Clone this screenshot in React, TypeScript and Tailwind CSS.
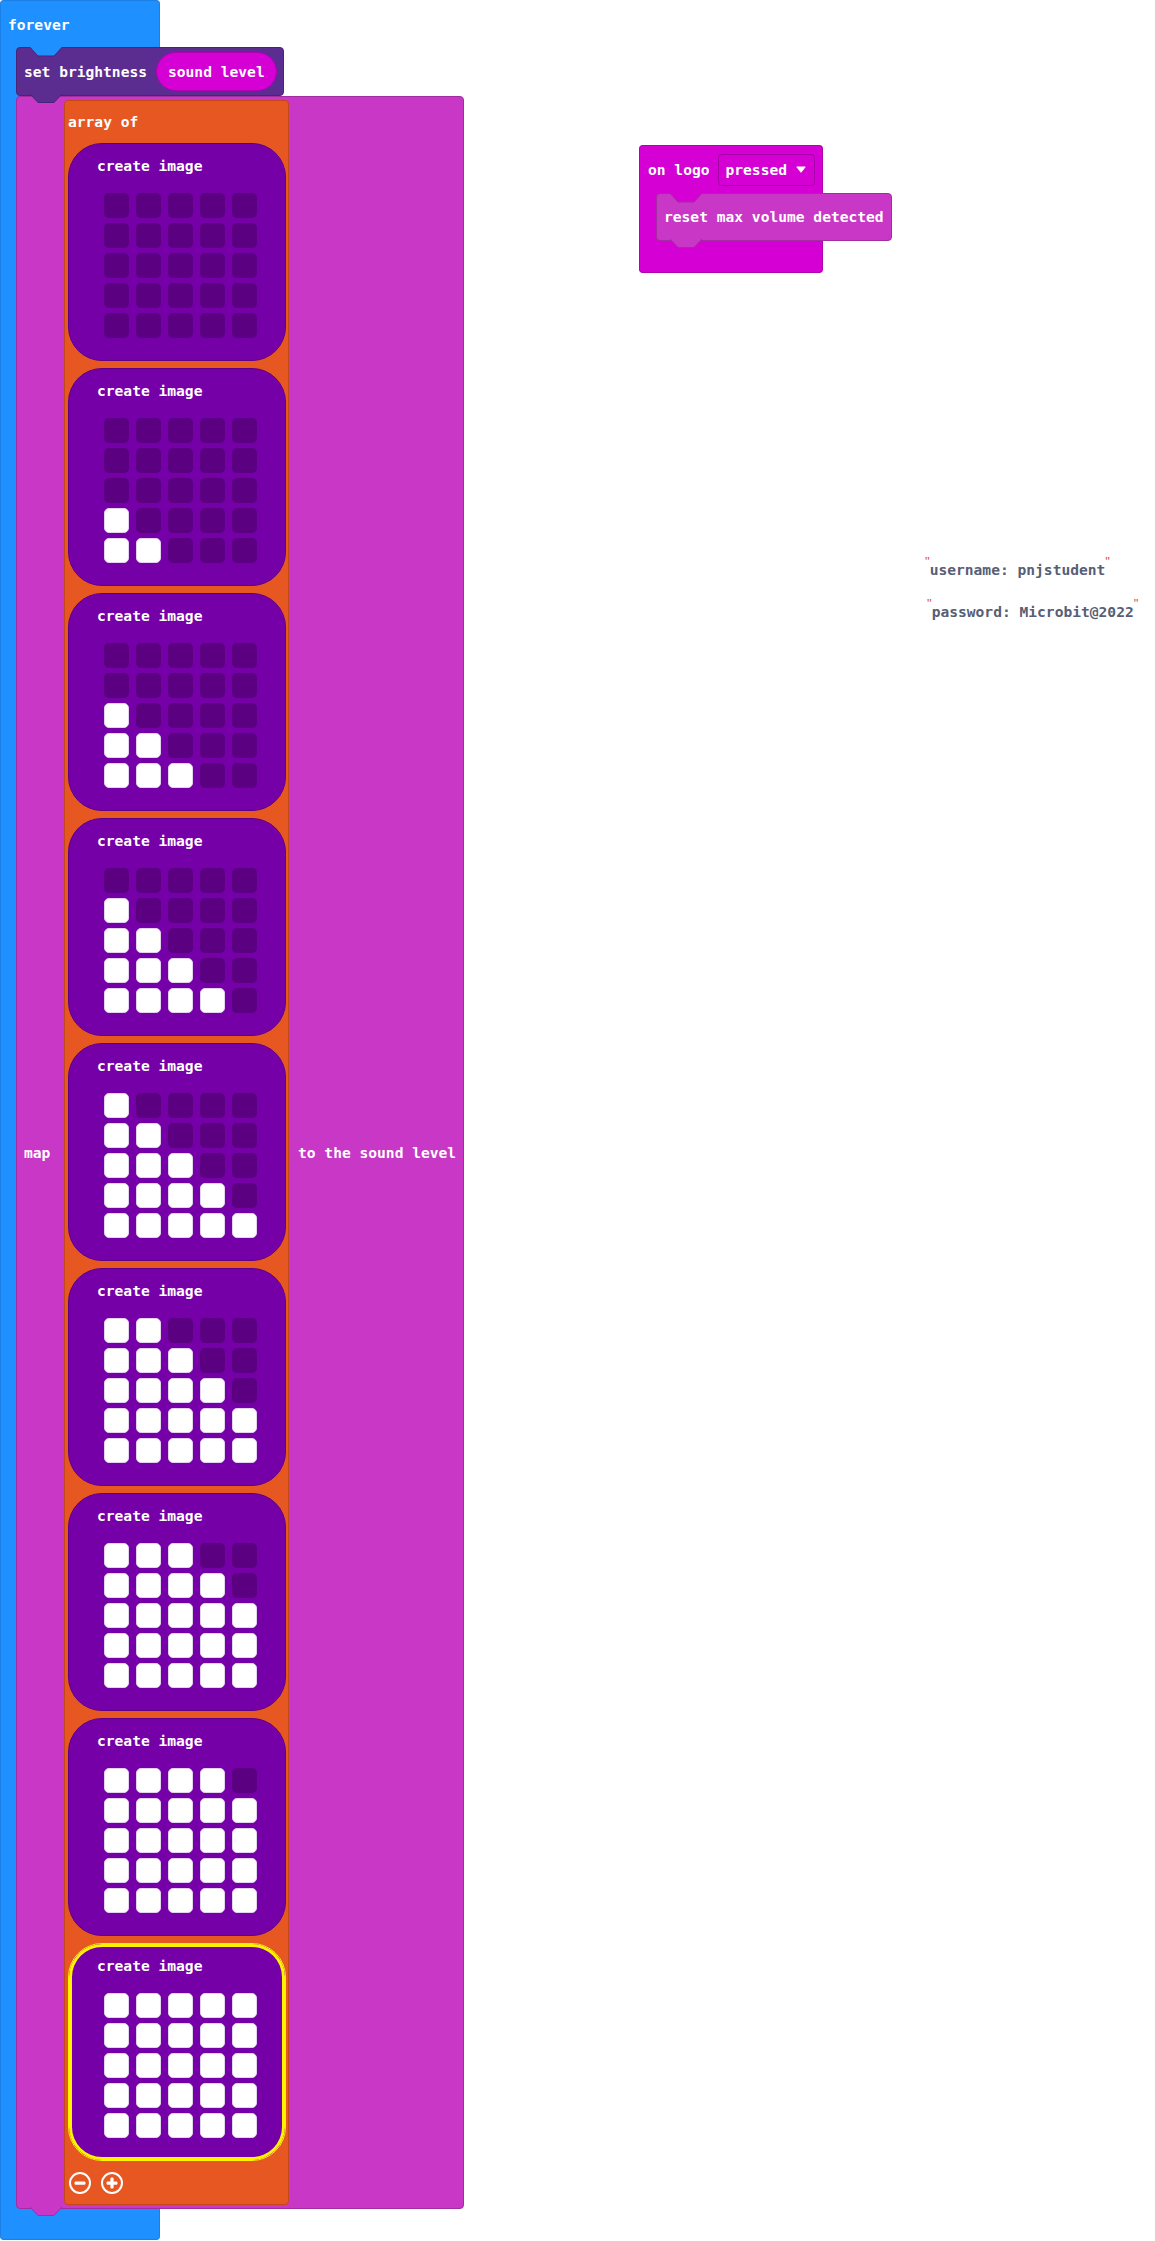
import React from "react";

// brightness levels for each frame (0 = all off)
const LEVELS = [0, 2, 3, 4, 5, 6, 7, 8, 9];

function Notch({ fill, stroke, className }: { fill: string; stroke: string; className: string }) {
  return (
    <svg width="32" height="10" viewBox="0 0 32 10" className={className}>
      <polygon points="0,0 32,0 24,9 8,9" fill={fill} />
      <polyline points="0,0.5 8,9 24,9 32,0.5" fill="none" stroke={stroke} strokeWidth="1" />
    </svg>
  );
}

function Tab({ fill, stroke, className }: { fill: string; stroke: string; className: string }) {
  return (
    <svg width="32" height="10" viewBox="0 0 32 10" className={className}>
      <polygon points="0,0 32,0 24,8.5 8,8.5" fill={fill} />
      <polyline points="0,0 8,8.5 24,8.5 32,0" fill="none" stroke={stroke} strokeWidth="1" />
    </svg>
  );
}

function LedGrid({ level }: { level: number }) {
  const rows = [0, 1, 2, 3, 4];
  return (
    <div className="grid grid-cols-[repeat(5,25px)] gap-x-[7px] gap-y-[5px]">
      {rows.map((r) => {
        const count = Math.max(0, Math.min(5, level - (4 - r)));
        return rows.map((c) => (
          <div
            key={`${r}-${c}`}
            className={
              c < count
                ? "h-[25px] w-[25px] rounded-[5px] bg-white border border-[#e2d4ee]"
                : "h-[25px] w-[25px] rounded-[5px] bg-[#5a0080]"
            }
          />
        ));
      })}
    </div>
  );
}

function ImageBlock({ level, selected }: { level: number; selected?: boolean }) {
  return (
    <div
      className={
        "h-[218px] w-[218px] rounded-[34px] bg-[#7600a8] border border-[#5e0087] " +
        (selected ? "shadow-[inset_0_0_0_3px_#fff200] border-[#fff200]" : "")
      }
    >
      <div className="pl-[28px] pt-[12px] leading-[20px]">create image</div>
      <div className="ml-[35px] mt-[17px]">
        <LedGrid level={level} />
      </div>
    </div>
  );
}

function CircleIcon({ plus }: { plus?: boolean }) {
  return (
    <svg width="22" height="22" viewBox="0 0 22 22">
      <circle cx="11" cy="11" r="10" fill="none" stroke="white" strokeWidth="2" />
      <rect x="5.5" y="9.5" width="11" height="3.2" rx="1.2" fill="white" />
      {plus && <rect x="9.4" y="5.5" width="3.2" height="11" rx="1.2" fill="white" />}
    </svg>
  );
}

function Quote({ className = "" }: { className?: string }) {
  return (
    <span className={"font-['Liberation_Sans',sans-serif] font-normal text-[13px] leading-[10px] text-[#d9534f] " + className}>
      "
    </span>
  );
}

export default function App() {
  return (
    <div className="relative w-[1155px] h-[2241px] bg-white overflow-hidden font-['DejaVu_Sans_Mono',monospace] font-bold text-[14.6px] text-white">
      {/* ─── forever stack ─── */}
      <div className="absolute left-0 top-0 flex flex-col">
        <div className="h-[47px] w-[160px] rounded-t-[4px] bg-[#1e90ff] border border-b-0 border-[#1a80e6] pl-[7px] pt-[14px] leading-[20px]">
          forever
        </div>

        <div className="flex bg-[linear-gradient(to_right,#1e90ff_150px,transparent_150px)]">
          <div className="w-[16px] shrink-0 bg-[#1e90ff] border-l border-[#1a80e6]" />
          <div className="flex flex-col">
            {/* set brightness */}
            <div className="relative z-10 flex h-[49px] w-[268px] items-center rounded-[4px] bg-[#5c2d91] border border-[#4a2375] pl-[7px]">
              <Notch fill="#1e90ff" stroke="#4a2375" className="absolute left-[13px] -top-px" />
              <Tab fill="#5c2d91" stroke="#4a2375" className="absolute left-[13px] -bottom-[9px]" />
              <span className="leading-[20px]">set brightness</span>
              <span className="ml-[9px] flex h-[39px] items-center rounded-full bg-[#d400d4] border border-[#b000b0] px-[11px] leading-[20px]">
                sound level
              </span>
            </div>

            {/* map */}
            <div className="relative flex w-[448px] items-center rounded-[4px] bg-[#c837c5] border border-[#a32ca1] py-[3px]">
              <Tab fill="#c837c5" stroke="#a32ca1" className="absolute left-[13px] -bottom-[9px]" />
              <div className="w-[47px] shrink-0 pl-[7px] leading-[20px]">map</div>

              {/* array of */}
              <div className="flex w-[225px] shrink-0 flex-col rounded-[4px] bg-[#e65722] border border-[#c4471a] px-[3px]">
                <div className="flex h-[42px] items-center leading-[20px]">array of</div>
                <div className="flex flex-col gap-[7px]">
                  {LEVELS.map((lv, i) => (
                    <ImageBlock key={i} level={lv} selected={i === LEVELS.length - 1} />
                  ))}
                </div>
                <div className="mt-[11px] mb-[10px] flex h-[22px] items-center gap-[10px] pl-[1px]">
                  <CircleIcon />
                  <CircleIcon plus />
                </div>
              </div>

              <div className="ml-[9px] leading-[20px]">to the sound level</div>
            </div>
          </div>
        </div>

        <div className="h-[31px] w-[160px] rounded-b-[4px] bg-[#1e90ff] border border-t-0 border-[#1a80e6]" />
      </div>

      {/* ─── on logo pressed ─── */}
      <div className="absolute left-[639px] top-[145px] flex w-[184px] flex-col">
        <div className="flex h-[48px] items-center rounded-t-[4px] bg-[#d400d4] border border-b-0 border-[#b000b0] pl-[8px]">
          <span className="leading-[20px]">on logo</span>
          <span className="ml-[8px] flex h-[32px] w-[97px] items-center rounded-[4px] border border-[#a800a8] pl-[7px] leading-[20px]">
            pressed
            <svg width="10" height="7" viewBox="0 0 10 7" className="ml-[9px]">
              <path d="M1 1 L9 1 L5 6 Z" fill="white" stroke="white" strokeWidth="1.2" strokeLinejoin="round" />
            </svg>
          </span>
        </div>
        <div className="flex bg-[#d400d4]">
          <div className="w-[17px] shrink-0 bg-[#d400d4] border-l border-[#b000b0]" />
          <div className="relative z-10 flex h-[48px] w-[236px] shrink-0 items-center rounded-[4px] bg-[#c837c5] border border-[#a32ca1] pl-[7px]">
            <Notch fill="#d400d4" stroke="#a32ca1" className="absolute left-[13px] -top-px" />
            <Tab fill="#c837c5" stroke="#a32ca1" className="absolute left-[13px] -bottom-[9px]" />
            <span className="leading-[20px]">reset max volume detected</span>
          </div>
        </div>
        <div className="h-[32px] rounded-b-[4px] bg-[#d400d4] border border-t-0 border-[#b000b0]" />
      </div>

      {/* ─── text notes ─── */}
      <div className="absolute left-[925px] top-[557px] flex flex-col gap-[19px] text-[#575e75]">
        <div className="flex items-start leading-[20px]">
          <Quote />
          <span className="mt-[3px]">username: pnjstudent</span>
          <Quote />
        </div>
        <div className="flex items-start leading-[20px]">
          <Quote className="ml-[2px]" />
          <span className="mt-[3px]">password: Microbit@2022</span>
          <Quote />
        </div>
      </div>
    </div>
  );
}
